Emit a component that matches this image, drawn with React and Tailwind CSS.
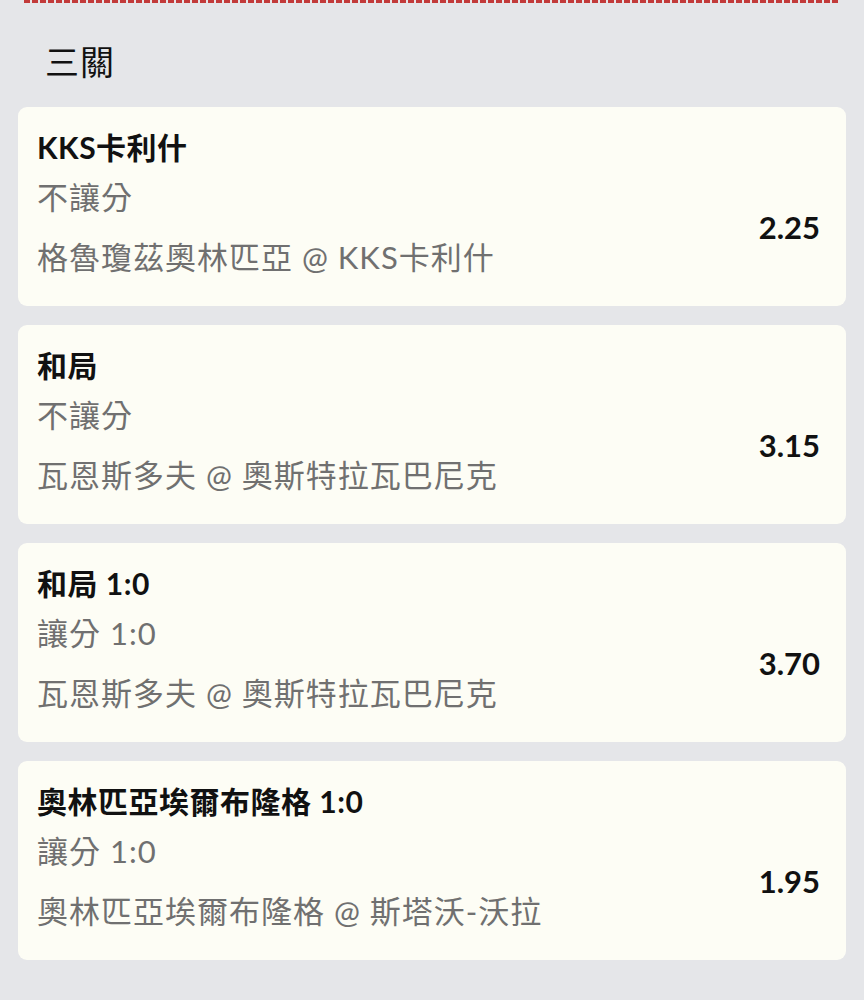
import React from 'react';

const bets = [
  { title: 'KKS卡利什', market: '不讓分', match: '格魯瓊茲奧林匹亞 @ KKS卡利什', odds: '2.25' },
  { title: '和局', market: '不讓分', match: '瓦恩斯多夫 @ 奧斯特拉瓦巴尼克', odds: '3.15' },
  { title: '和局 1:0', market: '讓分 1:0', match: '瓦恩斯多夫 @ 奧斯特拉瓦巴尼克', odds: '3.70' },
  { title: '奧林匹亞埃爾布隆格 1:0', market: '讓分 1:0', match: '奧林匹亞埃爾布隆格 @ 斯塔沃-沃拉', odds: '1.95' },
];

function BetCard({ bet }) {
  return (
    <div className="bg-[#fdfdf5] rounded-[9px] pl-[19px] pr-[26px] pt-[20px] pb-[19px]">
      <div className="h-[40px] leading-[40px] text-[30px] tracking-[0.5px] font-bold text-[#111]">{bet.title}</div>
      <div className="flex items-center justify-between">
        <div className="text-[31px] tracking-[1px] text-[#707070]">
          <div className="h-[60px] leading-[60px]">{bet.market}</div>
          <div className="h-[60px] leading-[60px]">{bet.match}</div>
        </div>
        <div className="text-[31px] font-bold text-[#111]">{bet.odds}</div>
      </div>
    </div>
  );
}

export default function App() {
  return (
    <div className="min-h-screen bg-[#e5e6e9] font-['Lato','Noto_Sans_CJK_TC',sans-serif]">
      {/* bottom edge of the ticket above */}
      <div className="mx-[24px] h-[3px] bg-[repeating-linear-gradient(90deg,#c23a3a_0_6px,transparent_6px_8px)]" />

      <div className="pl-[45px] pt-[37px] pb-[23px] h-[104px]">
        <h2 className="h-[44px] leading-[44px] text-[34px] tracking-[1px] text-[#111]">三關</h2>
      </div>

      <div className="px-[18px] flex flex-col gap-[19px]">
        {bets.map((bet, i) => (
          <BetCard key={i} bet={bet} />
        ))}
      </div>
    </div>
  );
}
